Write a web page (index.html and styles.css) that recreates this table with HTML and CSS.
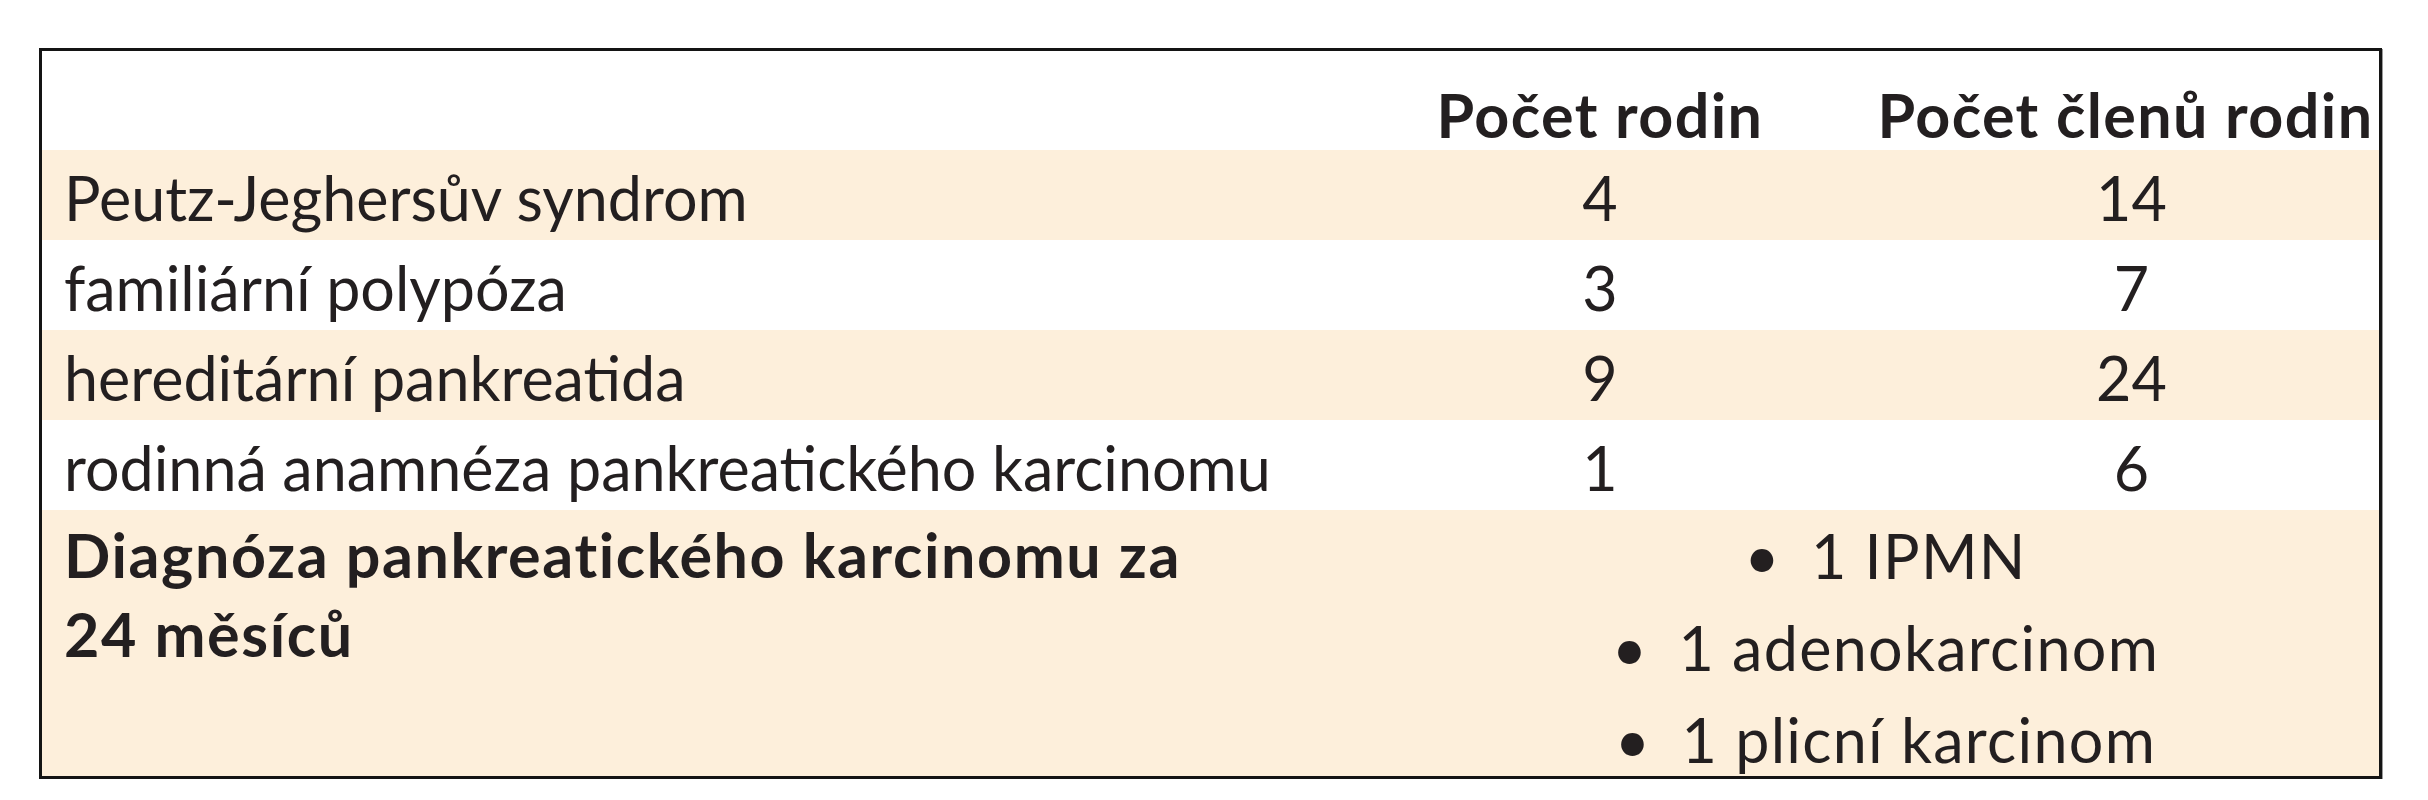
FILE: index.html
```html
<!DOCTYPE html>
<html lang="cs">
<head>
<meta charset="utf-8">
<title>Tabulka</title>
<link rel="stylesheet" href="styles.css">
</head>
<body>
<div class="table">
  <div class="row head">
    <div class="cell c1"></div>
    <div class="cell num">Počet rodin</div>
    <div class="cell num members">Počet členů rodin</div>
  </div>
  <div class="row tint">
    <div class="cell c1">Peutz-Jeghersův syndrom</div>
    <div class="cell num">4</div>
    <div class="cell num">14</div>
  </div>
  <div class="row">
    <div class="cell c1">familiární polypóza</div>
    <div class="cell num">3</div>
    <div class="cell num">7</div>
  </div>
  <div class="row tint">
    <div class="cell c1">hereditární pankreatida</div>
    <div class="cell num">9</div>
    <div class="cell num">24</div>
  </div>
  <div class="row">
    <div class="cell c1">rodinná anamnéza pankreatického karcinomu</div>
    <div class="cell num">1</div>
    <div class="cell num">6</div>
  </div>
  <div class="row tint last">
    <div class="cell c1 strong">Diagnóza pankreatického karcinomu za<br>24 měsíců</div>
    <div class="cell span">
      <div class="item"><span class="bullet">•</span>1 IPMN</div>
      <div class="item"><span class="bullet">•</span>1 adenokarcinom</div>
      <div class="item"><span class="bullet">•</span>1 plicní karcinom</div>
    </div>
  </div>
</div>
</body>
</html>
```

FILE: styles.css
```css
html, body {
  margin: 0;
  padding: 0;
  background: #ffffff;
}

body {
  padding: 48px 0 0 39px;
  font-family: Lato, "Noto Sans", sans-serif;
  color: #231f20;
}

.table {
  width: 2343px;
  box-sizing: border-box;
  border: 3px solid #141414;
  box-shadow: 1px 1px 0 #9a9a9a;
  background: #ffffff;
}

.row {
  display: grid;
  grid-template-columns: 1274px 568px minmax(0, 1fr);
  height: 90px;
  font-size: 61px;
  line-height: 90px;
}

.row.tint {
  background: #fdefdb;
}

.row.head {
  height: 99px;
  font-weight: 700;
  line-height: 73px;
  letter-spacing: 1.4px;
}

.row.head .cell {
  padding-top: 27px;
}

.row.head .num {
  display: flex;
  justify-content: center;
  align-items: flex-start;
}

.row.head .members {
  padding-right: 12px;
}

.cell {
  white-space: nowrap;
  padding-top: 3px;
}

.c1 {
  padding-left: 22px;
}

.num {
  text-align: center;
}

.row.last {
  height: 266px;
}

.strong {
  font-weight: 700;
  line-height: 79px;
  padding-top: 5px;
  letter-spacing: 1.6px;
}

.span {
  grid-column: 2 / 4;
  padding-left: 76px;
  text-align: center;
  line-height: 92px;
  padding-top: 0;
  letter-spacing: 1.3px;
}

.bullet {
  display: inline-block;
  margin-right: 30px;
}
```
